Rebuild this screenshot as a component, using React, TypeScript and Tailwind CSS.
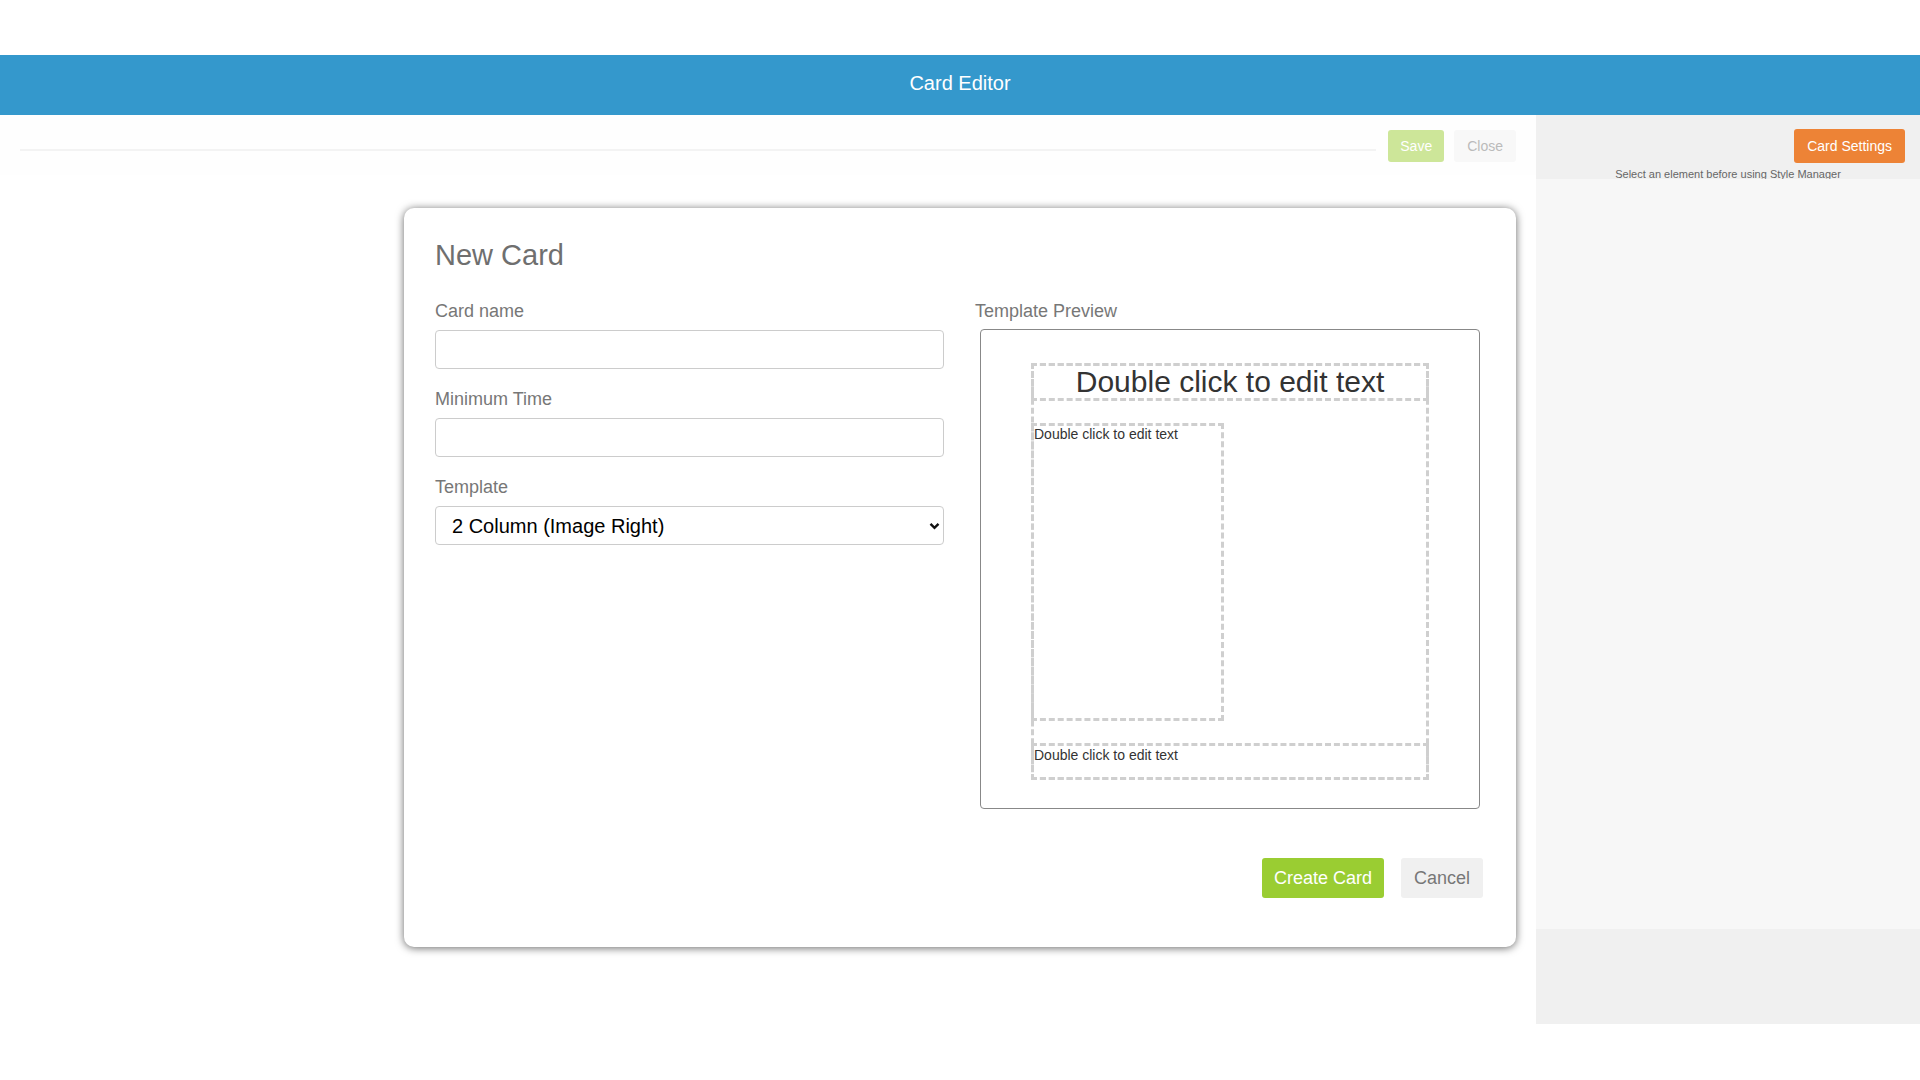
import { useState } from 'react';

const FONT = { fontFamily: '"Liberation Sans", Arial, sans-serif' };

function Field({ label, children }: { label: string; children: React.ReactNode }) {
  return (
    <div className="flex flex-col">
      <label className="text-[18px] leading-[21px] text-[#777]">{label}</label>
      <div className="mt-[8px]">{children}</div>
    </div>
  );
}

function TemplatePreview() {
  // two-column layout with an image slot on the right, shown as the editor outlines it
  const dashed = 'outline-[3px] outline-dashed outline-[#cfcfcf] outline-offset-[-3px]';
  return (
    <div className="h-[480px] w-[500px] rounded-[4px] border border-[#888] bg-white pt-[33px] pl-[50px]">
      <div className={`flex h-[417px] w-[398px] flex-col ${dashed}`}>
        <div className={`flex h-[38px] items-center justify-center text-[30px] leading-none text-[#333] ${dashed}`}>
          Double click to edit text
        </div>
        <div className="flex flex-1 py-[22px]">
          <div className={`h-full w-[193px] px-[3px] pt-[3px] text-[14px] leading-[16px] text-[#333] ${dashed}`}>
            Double click to edit text
          </div>
        </div>
        <div className={`h-[37px] px-[3px] pt-[4px] text-[14px] leading-[16px] text-[#333] ${dashed}`}>
          Double click to edit text
        </div>
      </div>
    </div>
  );
}

function NewCardDialog() {
  const [name, setName] = useState('');
  const [minTime, setMinTime] = useState('');
  const [template, setTemplate] = useState('2col-right');

  const inputCls =
    'h-[39px] w-[509px] rounded-[4px] border border-[#ccc] bg-white px-4 text-[20px] text-black outline-none';

  return (
    <div className="absolute inset-x-0 top-[208px] flex justify-center">
      <div className="h-[739px] w-[1112px] rounded-[10px] bg-white pl-[31px] pr-[32px] pt-[31px] shadow-[0_1px_9px_rgba(0,0,0,0.6)]">
        <h3 className="text-[29px] leading-[32px] text-[#6f6f6f]">New Card</h3>

        <div className="mt-[30px] flex justify-between">
          <div className="flex flex-col gap-[20px]">
            <Field label="Card name">
              <input className={inputCls} value={name} onChange={(e) => setName(e.target.value)} />
            </Field>
            <Field label="Minimum Time">
              <input className={inputCls} value={minTime} onChange={(e) => setMinTime(e.target.value)} />
            </Field>
            <Field label="Template">
              <div className="relative w-[509px]">
                <select
                  className={`${inputCls} appearance-none`}
                  value={template}
                  onChange={(e) => setTemplate(e.target.value)}
                >
                  <option value="1col">1 Column</option>
                  <option value="2col-left">2 Column (Image Left)</option>
                  <option value="2col-right">2 Column (Image Right)</option>
                </select>
                <svg
                  className="pointer-events-none absolute right-[4px] top-[16px]"
                  width="11"
                  height="8"
                  viewBox="0 0 11 8"
                  fill="none"
                >
                  <path d="M1.5 1.8 5.5 5.8 9.5 1.8" stroke="#111" strokeWidth="2.4" />
                </svg>
              </div>
            </Field>
          </div>

          <div className="mr-[4px] flex flex-col">
            <label className="ml-[-6px] text-[18px] leading-[21px] text-[#777]">Template Preview</label>
            <div className="mt-[7px] ml-[-1px]">
              <TemplatePreview />
            </div>
          </div>
        </div>

        <div className="mt-[49px] flex justify-end gap-[17px] pr-px">
          <button className="h-[40px] rounded-[3px] bg-[#9acd32] px-[12px] text-[18px] text-white">Create Card</button>
          <button className="h-[40px] rounded-[3px] bg-[#f0f0f0] px-[13px] text-[18px] text-[#777]">Cancel</button>
        </div>
      </div>
    </div>
  );
}

export default function App() {
  return (
    <div className="relative h-[1080px] w-[1920px] overflow-hidden bg-white" style={FONT}>
      <div className="h-[55px]" />
      <header className="flex h-[60px] items-center justify-center bg-[#3498cc] pb-[5px] text-[20px] text-white">
        Card Editor
      </header>

      <div className="flex">
        {/* canvas toolbar */}
        <div className="flex h-[60px] flex-1 items-start bg-[#fefefe] px-5 pt-[15px]">
          <div className="mt-[19px] mr-[12px] h-[2px] flex-1 bg-[#f3f3f3]" />
          <button className="h-[32px] rounded-[3px] bg-[#cde699] px-[12px] text-[14px] text-white">Save</button>
          <button className="ml-[10px] h-[32px] rounded-[3px] bg-[#f8f8f8] px-[13px] text-[14px] text-[#bbb]">
            Close
          </button>
        </div>

        {/* style manager panel */}
        <aside className="flex w-[384px] flex-col">
          <div className="flex h-[64px] flex-col bg-[#f0f0f0]">
            <div className="flex justify-end pt-[14px] pr-[15px]">
              <button className="h-[34px] rounded-[3px] bg-[#ed8336] px-[13px] text-[14px] text-white">
                Card Settings
              </button>
            </div>
            <p className="mt-[5px] text-center text-[11px] leading-[13px] text-[#666]">
              Select an element before using Style Manager
            </p>
          </div>
          <div className="h-[750px] bg-[#f7f7f7]" />
          <div className="h-[95px] bg-[#f0f0f0]" />
        </aside>
      </div>

      <NewCardDialog />
    </div>
  );
}
